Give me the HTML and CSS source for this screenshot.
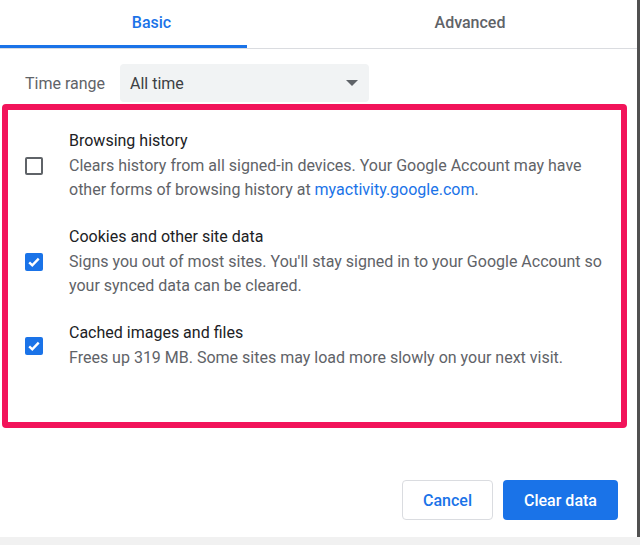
FILE: index.html
```html
<!DOCTYPE html>
<html lang="en">
<head>
  <meta charset="UTF-8">
  <title>Clear browsing data</title>
  <link rel="stylesheet" href="styles.css">
</head>
<body>
  <div class="dialog">
    <div class="tabs">
      <div class="tab active">Basic</div>
      <div class="tab">Advanced</div>
    </div>

    <div class="range-row">
      <span class="range-label">Time range</span>
      <div class="select">
        <span>All time</span>
        <span class="arrow"></span>
      </div>
    </div>

    <div class="highlight">
      <div class="item">
        <span class="checkbox"></span>
        <div class="item-text">
          <div class="item-title">Browsing history</div>
          <div class="item-desc">Clears history from all signed-in devices. Your Google Account may have other forms of browsing history at <a href="#">myactivity.google.com</a>.</div>
        </div>
      </div>

      <div class="item">
        <span class="checkbox checked">
          <svg viewBox="0 0 18 18" width="18" height="18"><path d="M4.2 9.3l3.1 3 6.4-6.6" fill="none" stroke="#fff" stroke-width="2.4"/></svg>
        </span>
        <div class="item-text">
          <div class="item-title">Cookies and other site data</div>
          <div class="item-desc">Signs you out of most sites. You'll stay signed in to your Google Account so your synced data can be cleared.</div>
        </div>
      </div>

      <div class="item">
        <span class="checkbox checked">
          <svg viewBox="0 0 18 18" width="18" height="18"><path d="M4.2 9.3l3.1 3 6.4-6.6" fill="none" stroke="#fff" stroke-width="2.4"/></svg>
        </span>
        <div class="item-text">
          <div class="item-title">Cached images and files</div>
          <div class="item-desc">Frees up 319 MB. Some sites may load more slowly on your next visit.</div>
        </div>
      </div>
    </div>

    <div class="actions">
      <button class="btn cancel">Cancel</button>
      <button class="btn primary">Clear data</button>
    </div>
  </div>
  <div class="page-bottom"></div>
</body>
</html>
```

FILE: styles.css
```css
body {
  margin: 0;
  font-family: Roboto, "Liberation Sans", Arial, sans-serif;
  font-size: 16px;
  color: #202124;
  background: #fff;
}

.dialog {
  width: 637px;
  height: 537px;
  border-right: 3px solid #505050;
  display: flex;
  flex-direction: column;
}

.tabs {
  display: flex;
  height: 48px;
  border-bottom: 1px solid #dadce0;
}

.tab {
  padding-left: 56px;
  text-align: center;
  line-height: 45px;
  font-size: 16px;
  font-weight: 500;
  color: #5f6368;
  flex: 1;
}

.tab.active {
  flex: 0 0 191px;
  color: #1a73e8;
  border-bottom: 3px solid #1a73e8;
}

.range-row {
  display: flex;
  align-items: center;
  padding: 15px 0 2px 25px;
}

.range-label {
  color: #5f6368;
  width: 95px;
}

.select {
  width: 229px;
  height: 38px;
  padding: 0 10px;
  background: #f1f3f4;
  border-radius: 4px;
  display: flex;
  align-items: center;
  justify-content: space-between;
  color: #3c4043;
}

.arrow {
  width: 0;
  height: 0;
  border-left: 6px solid transparent;
  border-right: 6px solid transparent;
  border-top: 6px solid #5f6368;
  margin-right: 1px;
}

.highlight {
  margin-left: 2px;
  width: 613px;
  border: 6px solid #f2145a;
  border-radius: 4px;
  padding: 20px 0 52px 0;
  display: flex;
  flex-direction: column;
  gap: 24px;
}

.item {
  display: flex;
  align-items: center;
}

.checkbox {
  flex: 0 0 14px;
  height: 14px;
  margin: 0 26px 0 17px;
  border: 2px solid #5f6368;
  border-radius: 2px;
}

.checkbox.checked {
  flex-basis: 18px;
  height: 18px;
  border: 0;
  background: #1a73e8;
  margin-right: 26px;
}

.checkbox svg {
  display: block;
}

.item-text {
  flex: 1;
  padding-right: 5px;
}

.item-title {
  line-height: 22px;
  margin-bottom: 2px;
  color: #202124;
}

.item-desc {
  line-height: 24px;
  color: #5f6368;
}

.item-desc a {
  color: #1a73e8;
  text-decoration: none;
}

.actions {
  display: flex;
  justify-content: flex-end;
  gap: 10px;
  padding: 52px 19px 0 0;
}

.btn {
  height: 40px;
  border-radius: 4px;
  font-family: inherit;
  font-size: 16px;
  font-weight: 500;
}

.cancel {
  width: 91px;
  background: #fff;
  border: 1px solid #dadce0;
  color: #1a73e8;
}

.primary {
  width: 115px;
  background: #1a73e8;
  border: 0;
  color: #fff;
}

.page-bottom {
  height: 8px;
  background: #f1f1f1;
}
```
